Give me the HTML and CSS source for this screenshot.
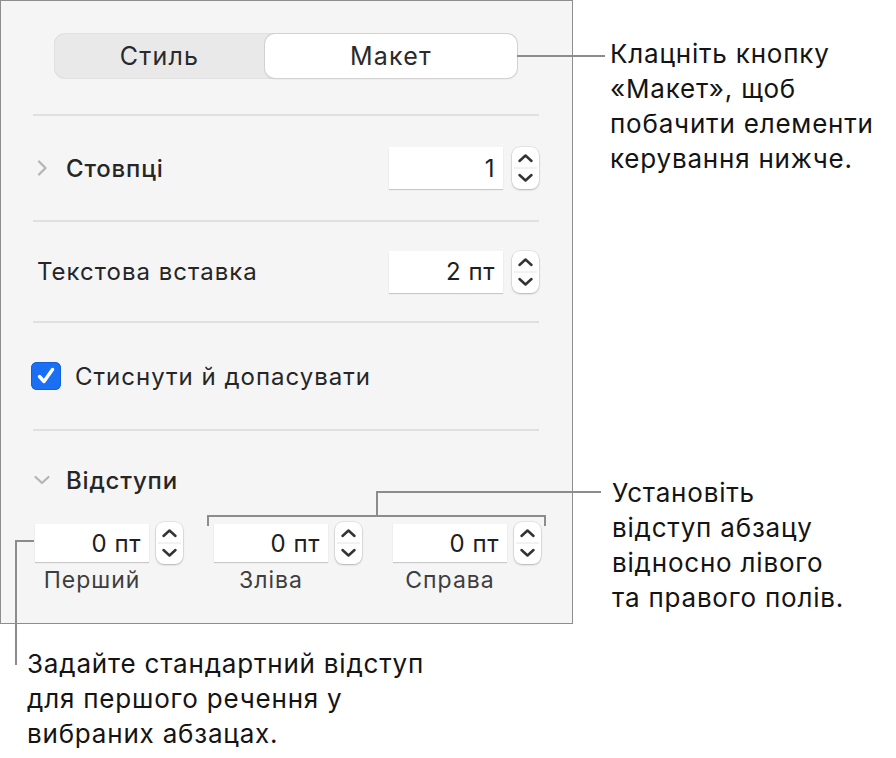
FILE: index.html
```html
<!DOCTYPE html>
<html lang="uk">
<head>
<meta charset="utf-8">
<title>Макет</title>
<link rel="stylesheet" href="styles.css">
</head>
<body>
<div class="page">
  <div class="panel">
    <div class="tabs">
      <div class="seg">
        <div class="seg-item">Стиль</div>
        <div class="seg-item active">Макет</div>
      </div>
    </div>
    <div class="divider"></div>

    <div class="row row-cols">
      <svg class="disc-right" width="12" height="18" viewBox="0 0 12 18"><path d="M3 2.5 L9.5 9 L3 15.5" fill="none" stroke="#b4b4b4" stroke-width="2.2" stroke-linecap="round" stroke-linejoin="round"/></svg>
      <span class="label strong">Стовпці</span>
      <div class="control">
        <div class="field">1</div>
        <div class="stepper"><svg width="27" height="42" viewBox="0 0 27 42"><line x1="2" y1="21" x2="25" y2="21" stroke="#e4e4e4" stroke-width="1"/><path d="M7.5 14 L13.5 8.5 L19.5 14" fill="none" stroke="#333" stroke-width="2.5" stroke-linecap="round" stroke-linejoin="round"/><path d="M7.5 28 L13.5 33.5 L19.5 28" fill="none" stroke="#333" stroke-width="2.5" stroke-linecap="round" stroke-linejoin="round"/></svg></div>
      </div>
    </div>
    <div class="divider"></div>

    <div class="row row-inset">
      <span class="label">Текстова вставка</span>
      <div class="control">
        <div class="field">2 пт</div>
        <div class="stepper"><svg width="27" height="42" viewBox="0 0 27 42"><line x1="2" y1="21" x2="25" y2="21" stroke="#e4e4e4" stroke-width="1"/><path d="M7.5 14 L13.5 8.5 L19.5 14" fill="none" stroke="#333" stroke-width="2.5" stroke-linecap="round" stroke-linejoin="round"/><path d="M7.5 28 L13.5 33.5 L19.5 28" fill="none" stroke="#333" stroke-width="2.5" stroke-linecap="round" stroke-linejoin="round"/></svg></div>
      </div>
    </div>
    <div class="divider"></div>

    <div class="row row-check">
      <span class="checkbox"><svg width="30" height="28" viewBox="0 0 30 28"><path d="M8.5 14.5 L13 19.5 L21.5 7.5" fill="none" stroke="#fff" stroke-width="3.4" stroke-linecap="round" stroke-linejoin="round"/></svg></span>
      <span class="label">Стиснути й допасувати</span>
    </div>
    <div class="divider"></div>

    <div class="indents">
      <div class="indents-head">
        <svg class="disc-down" width="18" height="10" viewBox="0 0 18 10"><path d="M2.5 2 L9 8 L15.5 2" fill="none" stroke="#b4b4b4" stroke-width="2.2" stroke-linecap="round" stroke-linejoin="round"/></svg>
        <span class="label strong">Відступи</span>
      </div>
      <div class="indent-fields">
        <div class="indent">
          <div class="control">
            <div class="field small">0 пт</div>
            <div class="stepper"><svg width="27" height="42" viewBox="0 0 27 42"><line x1="2" y1="21" x2="25" y2="21" stroke="#e4e4e4" stroke-width="1"/><path d="M7.5 14 L13.5 8.5 L19.5 14" fill="none" stroke="#333" stroke-width="2.5" stroke-linecap="round" stroke-linejoin="round"/><path d="M7.5 28 L13.5 33.5 L19.5 28" fill="none" stroke="#333" stroke-width="2.5" stroke-linecap="round" stroke-linejoin="round"/></svg></div>
          </div>
          <div class="caption">Перший</div>
        </div>
        <div class="indent">
          <div class="control">
            <div class="field small">0 пт</div>
            <div class="stepper"><svg width="27" height="42" viewBox="0 0 27 42"><line x1="2" y1="21" x2="25" y2="21" stroke="#e4e4e4" stroke-width="1"/><path d="M7.5 14 L13.5 8.5 L19.5 14" fill="none" stroke="#333" stroke-width="2.5" stroke-linecap="round" stroke-linejoin="round"/><path d="M7.5 28 L13.5 33.5 L19.5 28" fill="none" stroke="#333" stroke-width="2.5" stroke-linecap="round" stroke-linejoin="round"/></svg></div>
          </div>
          <div class="caption">Зліва</div>
        </div>
        <div class="indent">
          <div class="control">
            <div class="field small">0 пт</div>
            <div class="stepper"><svg width="27" height="42" viewBox="0 0 27 42"><line x1="2" y1="21" x2="25" y2="21" stroke="#e4e4e4" stroke-width="1"/><path d="M7.5 14 L13.5 8.5 L19.5 14" fill="none" stroke="#333" stroke-width="2.5" stroke-linecap="round" stroke-linejoin="round"/><path d="M7.5 28 L13.5 33.5 L19.5 28" fill="none" stroke="#333" stroke-width="2.5" stroke-linecap="round" stroke-linejoin="round"/></svg></div>
          </div>
          <div class="caption">Справа</div>
        </div>
      </div>
    </div>
  </div>

  <svg class="leaders" width="896" height="758" viewBox="0 0 896 758">
    <g fill="none" stroke="#8c8c8c" stroke-width="2">
      <path d="M517 56 H605"/>
      <path d="M208 526 V516 H545 V526"/>
      <path d="M377 516 V492 H601"/>
      <path d="M34 541 H16 V665"/>
    </g>
  </svg>

  <p class="note note-layout">Клацніть кнопку<br>«Макет», щоб<br>побачити елементи<br>керування нижче.</p>
  <p class="note note-sides">Установіть<br>відступ абзацу<br>відносно лівого<br>та правого полів.</p>
  <p class="note note-first">Задайте стандартний відступ<br>для першого речення у<br>вибраних абзацах.</p>
</div>
</body>
</html>
```

FILE: styles.css
```css
html, body {
  margin: 0;
  padding: 0;
  background: #ffffff;
}

body {
  font-family: Inter, "Noto Sans", "Liberation Sans", sans-serif;
  color: #1c1c1c;
}

.page {
  position: relative;
  width: 896px;
  height: 758px;
  overflow: hidden;
}

.panel {
  width: 573px;
  height: 624px;
  box-sizing: border-box;
  border: 1px solid #8d8d8d;
  background: #f5f5f5;
  padding: 0 33px 0 32px;
}

.tabs {
  height: 113px;
  box-sizing: border-box;
  padding: 32px 22px 0 21px;
}

.seg {
  display: flex;
  height: 46px;
  border-radius: 11px;
  background: #e9e9e9;
  box-shadow: inset 0 0 0 1px #e0e0e0;
}

.seg-item {
  flex: 1;
  display: flex;
  align-items: center;
  justify-content: center;
  font-size: 25px;
  letter-spacing: 1.2px;
  color: #2a2a2a;
}

.seg-item.active {
  flex: 0 0 252px;
  margin: 1px 0;
  background: #ffffff;
  border-radius: 10px;
  box-shadow: 0 0 0 1px #d2d2d2, 0 1px 2px rgba(0, 0, 0, 0.12);
}

.divider {
  height: 2px;
  background: #e0e0e0;
}

.row {
  display: flex;
  align-items: center;
}

.row-cols { height: 104px; }
.row-inset { height: 99px; padding-left: 4px; }
.row-check { height: 106px; }

.label {
  font-size: 24px;
  letter-spacing: 1px;
  color: #262626;
}

.label.strong {
  font-weight: 500;
  letter-spacing: 0.8px;
}

.disc-right {
  margin-left: 3px;
  margin-right: 18px;
}

.control {
  margin-left: auto;
  display: flex;
  align-items: center;
  gap: 9px;
}

.field {
  width: 114px;
  height: 42px;
  box-sizing: border-box;
  background: #ffffff;
  box-shadow: 0 1px 1px rgba(0, 0, 0, 0.18);
  display: flex;
  align-items: center;
  justify-content: flex-end;
  padding-right: 8px;
  font-size: 24px;
  letter-spacing: 0.6px;
  color: #202020;
}

.field.small {
  height: 38px;
}

.stepper {
  width: 27px;
  height: 42px;
  background: #ffffff;
  border-radius: 8px;
  box-shadow: 0 0 0 0.5px rgba(0, 0, 0, 0.12), 0 1px 2px rgba(0, 0, 0, 0.22);
}

.stepper svg {
  display: block;
}

.checkbox {
  width: 30px;
  height: 28px;
  margin-left: -2px;
  margin-right: 14px;
  border-radius: 6px;
  background: #1b6ff5;
  box-shadow: inset 0 0 0 1px #1460dc;
}

.checkbox svg {
  display: block;
}

.indents {
  padding-top: 32px;
}

.indents-head {
  height: 34px;
  display: flex;
  align-items: center;
}

.disc-down {
  margin-left: 0;
  margin-right: 15px;
}

.indent-fields {
  margin-top: 25px;
  margin-left: 2px;
  margin-right: -2px;
  display: flex;
  justify-content: space-between;
}

.indent .control {
  gap: 7px;
  height: 42px;
}

.caption {
  width: 114px;
  text-align: center;
  margin-top: 2px;
  font-size: 23px;
  letter-spacing: 1px;
  color: #3e3e3e;
}

.leaders {
  position: absolute;
  left: 0;
  top: 0;
  pointer-events: none;
}

.note {
  position: absolute;
  margin: 0;
  font-size: 26px;
  line-height: 35px;
  letter-spacing: 0.8px;
  color: #141414;
  white-space: nowrap;
}

.note-layout { left: 610px; top: 36px; }
.note-sides { left: 612px; top: 475px; }
.note-first { left: 27px; top: 646px; }
```
